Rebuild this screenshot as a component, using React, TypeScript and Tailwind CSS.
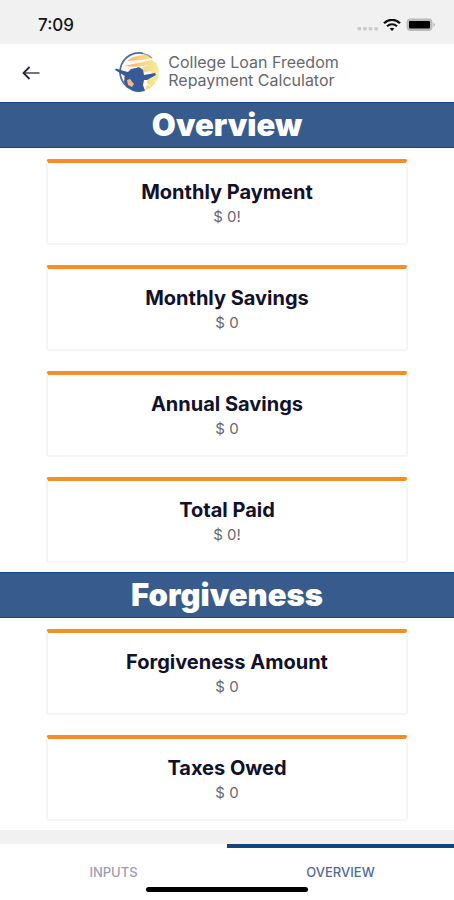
import { useState } from "react";

type Stat = { label: string; value: string };

const overview: Stat[] = [
  { label: "Monthly Payment", value: "$ 0!" },
  { label: "Monthly Savings", value: "$ 0" },
  { label: "Annual Savings", value: "$ 0" },
  { label: "Total Paid", value: "$ 0!" },
];

const forgiveness: Stat[] = [
  { label: "Forgiveness Amount", value: "$ 0" },
  { label: "Taxes Owed", value: "$ 0" },
];

function StatusBar() {
  return (
    <div className="flex h-11 items-center justify-between bg-[#f1f1f1] pt-[6px] pr-[18px] pl-[38px]">
      <span className="text-[17px] leading-5 font-medium text-[#161616]">7:09</span>
      <div className="flex items-center gap-1">
        <svg width="22" height="12" viewBox="0 0 22 12" fill="#cbcbcb" aria-hidden="true">
          <rect x="0.5" y="8" width="3.6" height="3.6" rx="1" />
          <rect x="6.1" y="8" width="3.6" height="3.6" rx="1" />
          <rect x="11.7" y="8" width="3.6" height="3.6" rx="1" />
          <rect x="17.3" y="8" width="3.6" height="3.6" rx="1" />
        </svg>
        <svg width="18" height="12" viewBox="0 0 18 12" fill="none" stroke="#111" aria-hidden="true">
          <path d="M1 4.3C5.6-.3 12.4-.3 17 4.3" strokeWidth="2.3" />
          <path d="M4 7.3c2.9-2.8 7.1-2.8 10 0" strokeWidth="2.1" />
          <path d="M9 11.9 6.6 9.6c1.4-1.2 3.4-1.2 4.8 0z" fill="#111" stroke="none" />
        </svg>
        <svg className="ml-px" width="30" height="14" viewBox="0 0 30 14" aria-hidden="true">
          <rect x="1" y="1" width="25" height="11.5" rx="3" fill="#bdbdbd" stroke="#b8b8b8" />
          <rect x="3" y="3" width="21" height="7.5" rx="1" fill="#000" />
          <path d="M27.5 4.8c1.8.5 1.8 3.4 0 3.9z" fill="#aaa" />
        </svg>
      </div>
    </div>
  );
}

function Logo() {
  return (
    <svg width="45" height="42" viewBox="0 0 45 42" aria-hidden="true">
      <defs>
        <linearGradient id="sun" x1="0" x2="45" gradientUnits="userSpaceOnUse">
          <stop offset="0.2" stopColor="#f5ac68" />
          <stop offset="0.6" stopColor="#f9d384" />
          <stop offset="1" stopColor="#f4ee9c" />
        </linearGradient>
        <clipPath id="disc">
          <circle cx="25" cy="21" r="19" />
        </clipPath>
      </defs>
      <circle cx="25" cy="21" r="19" fill="#fffdf3" />
      <g clipPath="url(#disc)" fill="url(#sun)">
        <path d="M12 10 18 6 33 3l5 4-11 2z" />
        <path d="M9 15 37 9l4 4-21 3z" />
        <path d="M24 18 41 11l4 10-7 3-2-4-10 2z" />
        <path d="m38 25 7-3-2 9-7-3z" />
        <path d="m33 28 5-1 3 5-4 4-5-4z" />
        <path d="m32 34 5 2-4 5-4-1z" />
        <path d="m8 24 7 3 3 8-6-1z" />
      </g>
      <path d="M14 37A19 19 0 0 1 28 2.3" fill="none" stroke="#4f6ba0" strokeWidth="1.8" />
      <path d="M28 2.3Q33 3.2 37 7" fill="none" stroke="#8d96a6" strokeWidth="1.3" />
      <path
        d="M1 17.5 9 20l4 1 3-3 5-1 3-1 4 3 1 5 11-2 1 2-9 5h-3l-1 5 2 6-6 1c-5 0-9-2-12-5l-3-5 1-6-5-3-5-3z"
        fill="#365b98"
      />
      <path d="m12 29 3-1 4 5-2 3-4-2z" fill="#f3b78a" />
    </svg>
  );
}

function Section({ title, stats }: { title: string; stats: Stat[] }) {
  return (
    <section>
      <h2 className="border-y border-[#174580] bg-[#385b8d] text-center text-[31px] leading-[44px] font-black text-white">
        {title}
      </h2>
      <div className="flex flex-col gap-5 px-[46px] pt-[11px] pb-[9px]">
        {stats.map((stat) => (
          <article
            key={stat.label}
            className="h-[86px] rounded-[3px] border-2 border-t-4 border-[#f4f5f7] border-t-[#f68e27] pt-4 text-center"
          >
            <h3 className="text-[20px] leading-[26px] font-bold text-[#11112b]">{stat.label}</h3>
            <p className="text-[15px] leading-6 text-[#68686e]">{stat.value}</p>
          </article>
        ))}
      </div>
    </section>
  );
}

export default function App() {
  const [tab, setTab] = useState("OVERVIEW");
  return (
    <div className="flex min-h-screen flex-col bg-white font-['Inter','Liberation_Sans',sans-serif]">
      <StatusBar />
      <header className="grid h-[58px] grid-cols-[1fr_auto_1fr] items-center pb-[2px]">
        <button type="button" aria-label="Back" className="ml-[22px] w-[18px]">
          <svg width="18" height="16" viewBox="0 0 18 16" fill="none" stroke="#252530" strokeWidth="1.8" aria-hidden="true">
            <path d="M17.5 9H2" stroke="#66666e" />
            <path d="M7.5 3 1.5 9 7.5 15" />
          </svg>
        </button>
        <div className="flex items-center gap-2">
          <Logo />
          <h1 className="pb-[2px] text-[16px] leading-[18px] text-[#67676d]">
            College Loan Freedom
            <br />
            Repayment Calculator
          </h1>
        </div>
      </header>
      <main className="flex-1">
        <Section title="Overview" stats={overview} />
        <Section title="Forgiveness" stats={forgiveness} />
      </main>
      <footer className="border-t-[14px] border-[#f1f1f1]">
        <nav className="relative grid h-14 grid-cols-2">
          {["INPUTS", "OVERVIEW"].map((name) => (
            <button
              key={name}
              type="button"
              onClick={() => setTab(name)}
              className={
                tab === name
                  ? "border-t-4 border-[#174580] pb-[2px] text-[13px] font-medium text-[#526a98]"
                  : "border-t-4 border-transparent pb-[2px] text-[13px] font-medium text-[#9c9cb2]"
              }
            >
              {name}
            </button>
          ))}
          <div className="absolute bottom-2 left-1/2 h-[5px] w-[162px] -translate-x-1/2 rounded-full bg-black" />
        </nav>
      </footer>
    </div>
  );
}
